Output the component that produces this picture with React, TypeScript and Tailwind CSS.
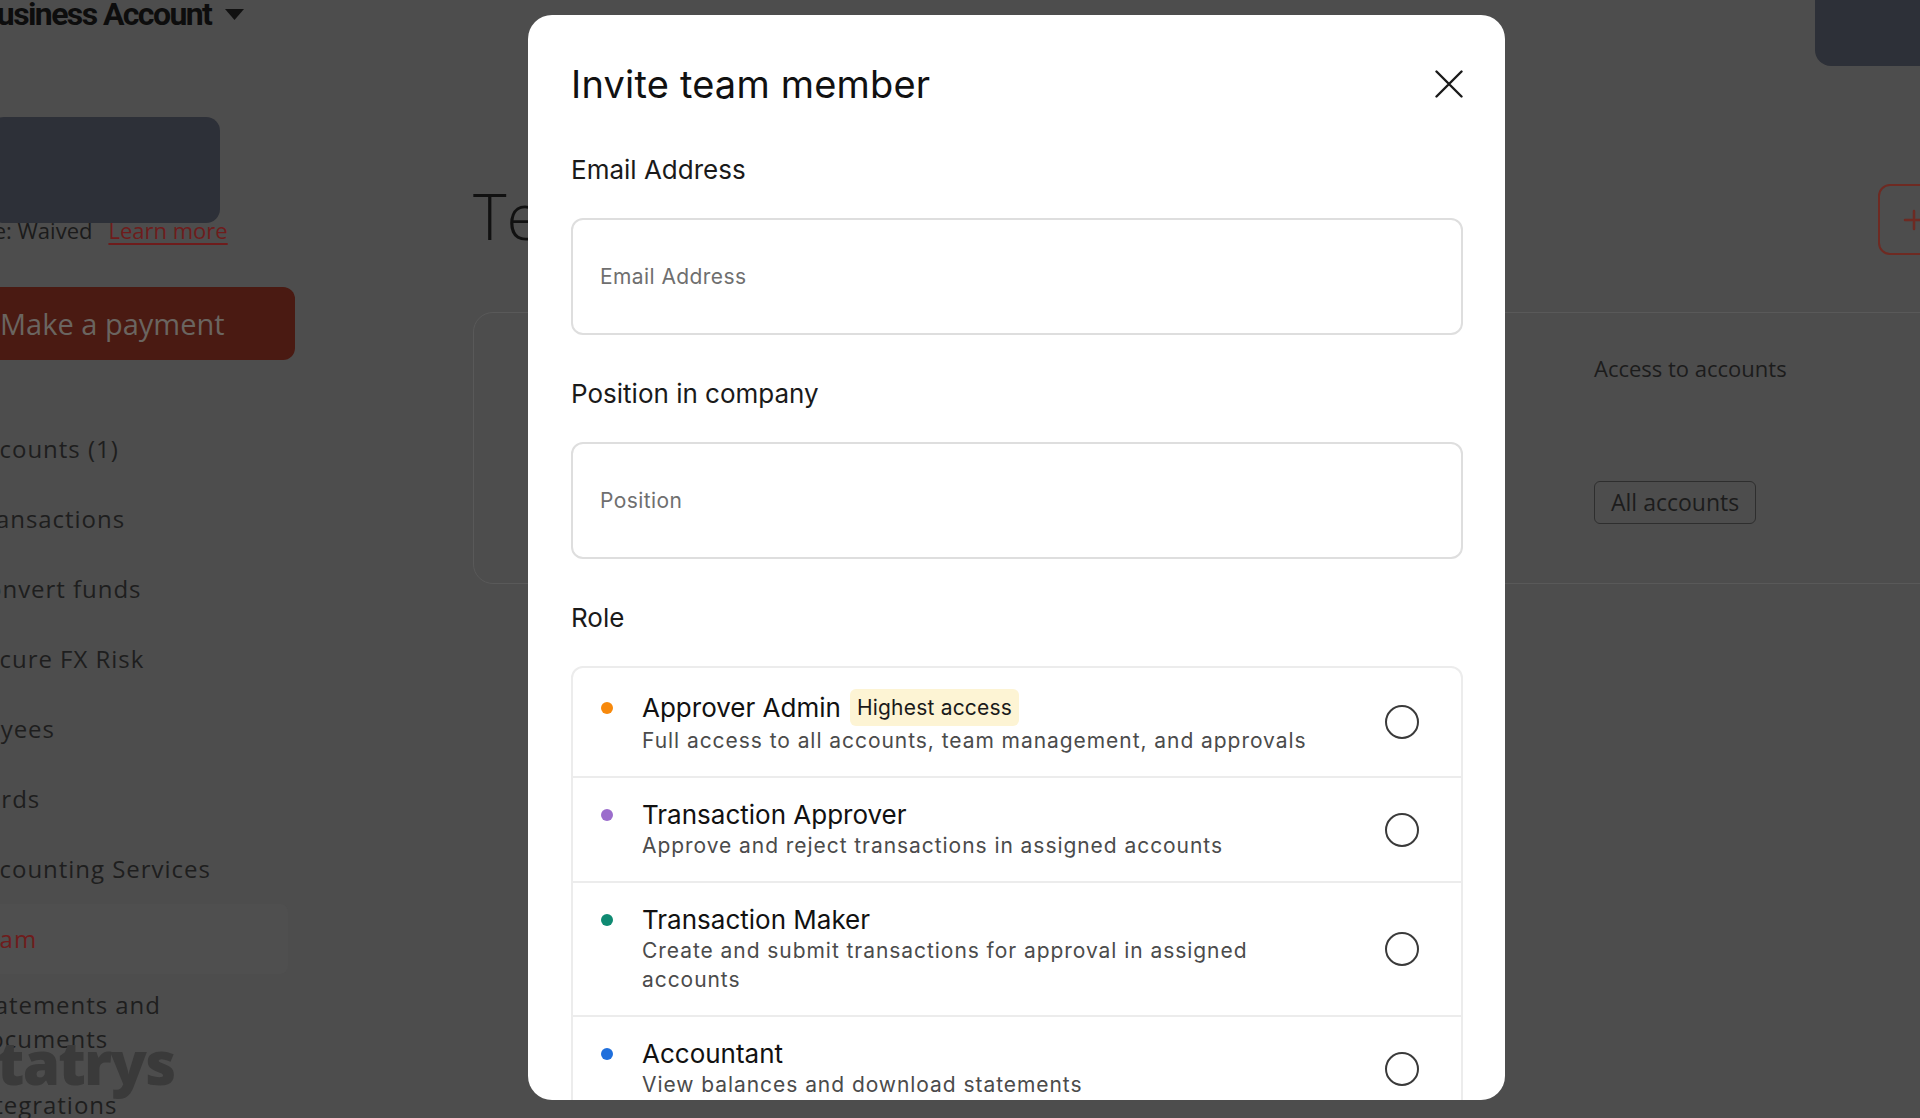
import React from 'react'

const roles = [
  {
    name: 'Approver Admin',
    badge: 'Highest access',
    desc: 'Full access to all accounts, team management, and approvals',
    dot: 'bg-[#f7890c]',
  },
  {
    name: 'Transaction Approver',
    desc: 'Approve and reject transactions in assigned accounts',
    dot: 'bg-[#9b6dcc]',
  },
  {
    name: 'Transaction Maker',
    desc: 'Create and submit transactions for approval in assigned accounts',
    dot: 'bg-[#0f8a72]',
  },
  {
    name: 'Accountant',
    desc: 'View balances and download statements',
    dot: 'bg-[#1f6fdc]',
  },
]

const navItems = [
  'Accounts (1)',
  'Transactions',
  'Convert funds',
  'Secure FX Risk',
  'Payees',
  'Cards',
  'Accounting Services',
  'Team',
  'Statements and Documents',
  'Integrations',
]

const Sidebar = () => (
  <aside className="relative w-[473px] shrink-0 flex flex-col font-['Open_Sans',sans-serif]">
    <div className="shrink-0 -mt-[6px] -ml-[22px] flex items-center h-[40px]">
      <span className="font-['Roboto',sans-serif] text-[32px] leading-[40px] font-bold tracking-[-0.05em] text-[#0d0d0d]">
        Business Account
      </span>
      <svg className="ml-[14px] mt-[1px]" width="19" height="12" viewBox="0 0 19 12">
        <path d="M0 0 H19 L9.5 11 Z" fill="#111" />
      </svg>
    </div>
    <div className="shrink-0 relative z-10 mt-[83px] -ml-[10px] w-[230px] h-[106px] rounded-[14px] bg-[#2d3038]" />
    <div className="shrink-0 -mt-[7px] -ml-[30px] flex items-center gap-[16px] h-[28px] text-[22px] text-[#1b1b1b]">
      <span>Fee: Waived</span>
      <span className="text-[#6e1c1c] underline underline-offset-4">Learn more</span>
    </div>
    <div className="shrink-0 mt-[43px] -ml-[30px] w-[325px] h-[73px] rounded-[12px] bg-[#4a1a12] flex items-center pl-[30px]">
      <span className="text-[29px] font-medium text-[#6a6560]">Make a payment</span>
    </div>
    <nav className="shrink-0 mt-[54px] flex flex-col">
      {navItems.map((item) => (
        <div
          key={item}
          className={`shrink-0 -ml-[29px] w-[317px] rounded-r-[8px] ${
            item === 'Statements and Documents' ? 'py-[14px]' : 'py-[18px]'
          } ${item === 'Team' ? 'bg-[#4f4f4f]' : ''}`}
        >
          <span
            className={`block w-[285px] text-[24px] leading-[34px] font-medium tracking-[0.04em] ${
              item === 'Team' ? 'text-[#6e1c1c]' : 'text-[#1e1e1e]'
            }`}
          >
            {item}
          </span>
        </div>
      ))}
    </nav>
    <div className="absolute -left-[36px] top-[1030px] text-[60px] leading-[64px] font-extrabold tracking-[-0.03em] text-[#3a3a3a]">
      Statrys
    </div>
  </aside>
)

const Main = () => (
  <main className="w-[1487px] shrink-0 flex flex-col font-['Open_Sans',sans-serif]">
    <div className="shrink-0 h-[66px] flex justify-end pr-[20px]">
      <div className="-mt-[20px] w-[125px] h-[86px] rounded-[16px] bg-[#2d3038]" />
    </div>
    <div className="shrink-0 mt-[118px] h-[71px] flex items-center">
      <h1 className="w-[1405px] shrink-0 -mt-[8px] text-[64px] leading-[71px] font-light text-[#111]">Team members</h1>
      <div className="h-[71px] px-[22px] rounded-[12px] border-2 border-[#6e2a22] flex items-center gap-[10px]">
        <svg width="24" height="24" viewBox="0 0 24 24" stroke="#6e2a22" strokeWidth="2.5" strokeLinecap="round">
          <path d="M12 3v18M3 12h18" />
        </svg>
        <span className="text-[22px] text-[#6e2a22]">Invite</span>
      </div>
    </div>
    <div className="shrink-0 mt-[57px] h-[272px] rounded-[20px] border border-[#595959] pl-[1120px] pt-[40px]">
      <div className="text-[22px] leading-[30px] text-[#1c1c1c]">Access to accounts</div>
      <div className="mt-[98px] inline-flex items-center h-[43px] px-[16px] rounded-[6px] border-[1.5px] border-[#2e2e2e] text-[23px] text-[#1c1c1c]">
        All accounts
      </div>
    </div>
  </main>
)

const Field = ({ label, placeholder }: { label: string; placeholder: string }) => (
  <div className="flex flex-col">
    <label className="text-[26px] leading-[32px] text-[#1a1a1a]">{label}</label>
    <input
      placeholder={placeholder}
      className="mt-[32px] h-[117px] rounded-[12px] border-2 border-[#dedede] px-[27px] text-[21px] tracking-[0.02em] text-[#1a1a1a] placeholder:text-[#6f6f6f] outline-none"
    />
  </div>
)

const InviteModal = () => (
  <div className="absolute left-[528px] top-[15px] w-[977px] h-[1085px] bg-white rounded-[24px] overflow-hidden font-['Inter',sans-serif]">
    <div className="pl-[43px] pr-[42px] pt-[47px]">
      <div className="flex items-center justify-between h-[44px]">
        <h2 className="text-[38px] leading-[44px] tracking-[0.005em] text-[#111]">Invite team member</h2>
        <button className="w-[28px] h-[28px]">
          <svg width="28" height="28" viewBox="0 0 28 28" stroke="#1a1a1a" strokeWidth="2.4" strokeLinecap="round">
            <path d="M1.5 1.5 26.5 26.5M26.5 1.5 1.5 26.5" />
          </svg>
        </button>
      </div>
      <div className="mt-[48px] flex flex-col gap-[43px]">
        <Field label="Email Address" placeholder="Email Address" />
        <Field label="Position in company" placeholder="Position" />
        <div className="flex flex-col">
          <span className="text-[26px] leading-[32px] text-[#1a1a1a]">Role</span>
          <div className="mt-[32px] rounded-[12px] border-2 border-[#ececec] divide-y-2 divide-[#ececec]">
            {roles.map((role) => (
              <div key={role.name} className="flex items-center pl-[28px] pr-[42px] py-[21px]">
                <div className="flex flex-1 min-w-0 items-start pr-[64px]">
                  <div className={`flex items-center ${role.badge ? 'h-[37px]' : 'h-[32px]'}`}>
                    <span className={`w-[12px] h-[12px] rounded-full ${role.dot}`} />
                  </div>
                  <div className="ml-[29px] flex flex-col">
                    <div className="flex items-center gap-[9px]">
                      <span className="text-[26px] leading-[32px] text-[#111]">{role.name}</span>
                      {role.badge && (
                        <span className="h-[37px] px-[7px] flex items-center rounded-[6px] bg-[#fdf4d4] text-[21px] tracking-[0.01em] text-[#1a1a1a]">
                          {role.badge}
                        </span>
                      )}
                    </div>
                    <span className="text-[21px] leading-[29px] tracking-[0.045em] text-[#4b4b4b]">{role.desc}</span>
                  </div>
                </div>
                <span className="w-[34px] h-[34px] shrink-0 rounded-full border-2 border-[#3a3a3a]" />
              </div>
            ))}
          </div>
        </div>
      </div>
    </div>
  </div>
)

export default function App() {
  return (
    <div className="relative w-[1920px] h-[1118px] overflow-hidden bg-[#4d4d4d]">
      <div className="flex h-full">
        <Sidebar />
        <Main />
      </div>
      <InviteModal />
    </div>
  )
}
